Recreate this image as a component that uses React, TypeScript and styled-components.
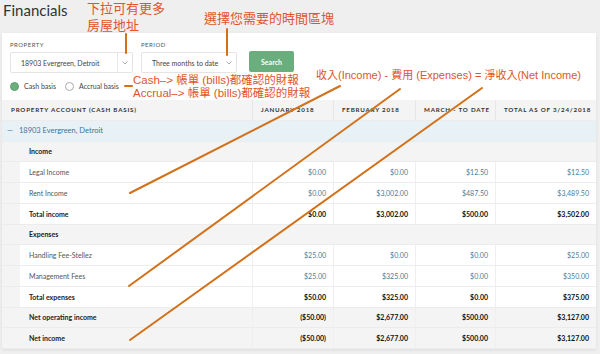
import React from "react";
import styled, { createGlobalStyle, css } from "styled-components";

const GlobalStyle = createGlobalStyle`
  html, body {
    margin: 0;
    padding: 0;
  }
  body {
    background: #efefef;
    font-family: Lato, "Open Sans", sans-serif;
  }
`;

const Page = styled.div`
  position: relative;
  width: 600px;
  height: 354px;
  overflow: hidden;
  padding: 0 4px 0 2px;
  box-sizing: border-box;
`;

const Title = styled.h1`
  margin: 0;
  height: 33px;
  padding: 1px 0 0 1px;
  box-sizing: border-box;
  font-size: 15px;
  line-height: 18px;
  font-weight: 400;
  color: #333;
`;

const Card = styled.section`
  background: #fff;
  box-shadow: 0 1px 3px rgba(0, 0, 0, 0.08);
`;

const Filters = styled.div`
  display: flex;
  align-items: flex-end;
  gap: 8px;
  padding: 8px 8px 0;
`;

const Field = styled.div`
  display: flex;
  flex-direction: column;
  gap: 3px;
`;

const FieldLabel = styled.label`
  font-size: 6px;
  line-height: 8px;
  letter-spacing: 0.5px;
  text-transform: uppercase;
  color: #555;
`;

const Select = styled.div<{ $width: number }>`
  display: flex;
  align-items: center;
  width: ${({ $width }) => $width}px;
  height: 21px;
  box-sizing: border-box;
  border: 1px solid #e4e4e4;
  border-radius: 2px;
  background: #fff;
  font-size: 7px;
  color: #444;
`;

const SelectText = styled.span`
  flex: 1;
  padding-left: 10px;
`;

const Chevron = styled.span<{ $divider?: boolean }>`
  display: flex;
  align-items: center;
  justify-content: center;
  width: 14px;
  height: 100%;
  border-left: ${({ $divider }) => ($divider ? "1px solid #e8e8e8" : "none")};
  color: #999;
`;

const SearchButton = styled.button`
  width: 45px;
  height: 21px;
  margin-left: 4px;
  margin-bottom: 1px;
  border: none;
  border-radius: 2px;
  background: #6aae7d;
  color: #fff;
  font-family: inherit;
  font-size: 7px;
  font-weight: 700;
  padding: 0;
`;

const Basis = styled.div`
  display: flex;
  align-items: center;
  gap: 9px;
  height: 10px;
  margin: 8px 0 9px;
  padding-left: 8px;
`;

const Radio = styled.span`
  display: flex;
  align-items: center;
  gap: 5px;
  font-size: 7px;
  color: #444;
`;

const Dot = styled.span<{ $on?: boolean }>`
  width: 9px;
  height: 9px;
  box-sizing: border-box;
  border-radius: 50%;
  border: 1px solid ${({ $on }) => ($on ? "#5d9f6f" : "#aaa")};
  background: ${({ $on }) => ($on ? "#6aae7d" : "#fff")};
`;

type Tone = "head" | "property" | "section" | "detail" | "total" | "net";

const Row = styled.div<{ $tone: Tone }>`
  display: grid;
  grid-template-columns: 250px 81px 82px 80px 101px;
  height: 20.75px;
  box-sizing: border-box;
  border-bottom: 1px solid #ececec;
  font-size: 7px;
  color: #444;
  background: ${({ $tone }) =>
    $tone === "head" || $tone === "section" || $tone === "net"
      ? "#f4f4f4"
      : $tone === "property"
      ? "#e8f1f6"
      : "#fff"};
  font-weight: ${({ $tone }) => ($tone === "detail" ? 400 : 700)};
  ${({ $tone }) =>
    $tone === "head" &&
    css`
      font-size: 6.2px;
      letter-spacing: 0.8px;
      text-transform: uppercase;
      color: #333;
    `}
`;

const NameCell = styled.div<{ $gutter?: boolean }>`
  display: flex;
  align-items: center;
  padding-left: 27px;
  color: #222;
  ${({ $gutter }) =>
    $gutter &&
    css`
      background: linear-gradient(to right, #f4f4f4 18px, transparent 18px);
    `}
`;

const DetailName = styled(NameCell)`
  color: #555;
`;

const HeadCell = styled.div<{ $first?: boolean }>`
  display: flex;
  align-items: center;
  padding-left: ${({ $first }) => ($first ? 9 : 8)}px;
  border-left: ${({ $first }) => ($first ? "none" : "1px solid #e6e6e6")};
`;

const PropertyCell = styled.div`
  grid-column: 1 / -1;
  display: flex;
  align-items: center;
  gap: 6px;
  padding-left: 5px;
  font-weight: 400;
  font-size: 7.5px;
  color: #3c7694;
`;

const Amount = styled.div<{ $link?: boolean }>`
  display: flex;
  align-items: center;
  justify-content: flex-end;
  padding-right: 7px;
  border-left: 1px solid #efefef;
  color: ${({ $link }) => ($link ? "#4a7d99" : "#111")};
`;

const Overlay = styled.div`
  position: absolute;
  inset: 0;
  pointer-events: none;
  font-family: "Liberation Sans", "Noto Sans CJK TC", sans-serif;
  color: #e0552a;
`;

const Note = styled.div<{ $x: number; $y: number; $size: number }>`
  position: absolute;
  left: ${({ $x }) => $x}px;
  top: ${({ $y }) => $y}px;
  font-size: ${({ $size }) => $size}px;
  line-height: 1.2;
  white-space: nowrap;
`;

const Lines = styled.svg`
  position: absolute;
  inset: 0;
`;

type Line = {
  name: string;
  kind: "detail" | "total" | "net" | "section";
  values?: string[];
};

const rows: Line[] = [
  { name: "Income", kind: "section" },
  { name: "Legal Income", kind: "detail", values: ["$0.00", "$0.00", "$12.50", "$12.50"] },
  { name: "Rent Income", kind: "detail", values: ["$0.00", "$3,002.00", "$487.50", "$3,489.50"] },
  { name: "Total income", kind: "total", values: ["$0.00", "$3,002.00", "$500.00", "$3,502.00"] },
  { name: "Expenses", kind: "section" },
  { name: "Handling Fee-Stellez", kind: "detail", values: ["$25.00", "$0.00", "$0.00", "$25.00"] },
  { name: "Management Fees", kind: "detail", values: ["$25.00", "$325.00", "$0.00", "$350.00"] },
  { name: "Total expenses", kind: "total", values: ["$50.00", "$325.00", "$0.00", "$375.00"] },
  { name: "Net operating income", kind: "net", values: ["($50.00)", "$2,677.00", "$500.00", "$3,127.00"] },
  { name: "Net income", kind: "net", values: ["($50.00)", "$2,677.00", "$500.00", "$3,127.00"] },
];

const columns = ["January 2018", "February 2018", "March - to date", "Total as of 3/24/2018"];

const ChevronIcon = () => (
  <svg width="6" height="4" viewBox="0 0 6 4">
    <path d="M0.5 0.5 L3 3 L5.5 0.5" fill="none" stroke="#999" strokeWidth="0.8" />
  </svg>
);

const App: React.FC = () => {
  return (
    <Page>
      <GlobalStyle />
      <Title>Financials</Title>
      <Card>
        <Filters>
          <Field>
            <FieldLabel>Property</FieldLabel>
            <Select $width={123}>
              <SelectText>18903 Evergreen, Detroit</SelectText>
              <Chevron $divider>
                <ChevronIcon />
              </Chevron>
            </Select>
          </Field>
          <Field>
            <FieldLabel>Period</FieldLabel>
            <Select $width={96}>
              <SelectText>Three months to date</SelectText>
              <Chevron>
                <ChevronIcon />
              </Chevron>
            </Select>
          </Field>
          <SearchButton>Search</SearchButton>
        </Filters>
        <Basis>
          <Radio>
            <Dot $on />
            Cash basis
          </Radio>
          <Radio>
            <Dot />
            Accrual basis
          </Radio>
        </Basis>

        <Row $tone="head">
          <HeadCell $first>Property account (cash basis)</HeadCell>
          {columns.map((c) => (
            <HeadCell key={c}>{c}</HeadCell>
          ))}
        </Row>
        <Row $tone="property">
          <PropertyCell>
            <span>—</span>18903 Evergreen, Detroit
          </PropertyCell>
        </Row>
        {rows.map((r) => (
          <Row key={r.name} $tone={r.kind}>
            {r.kind === "detail" ? (
              <DetailName $gutter>{r.name}</DetailName>
            ) : (
              <NameCell $gutter={r.kind === "total"}>{r.name}</NameCell>
            )}
            {r.values
              ? r.values.map((v, i) => (
                  <Amount key={i} $link={r.kind === "detail"}>
                    {v}
                  </Amount>
                ))
              : null}
          </Row>
        ))}
      </Card>

      <Overlay>
        <Note $x={87} $y={1} $size={13}>
          下拉可有更多
        </Note>
        <Note $x={87} $y={18} $size={13}>
          房屋地址
        </Note>
        <Note $x={204} $y={11} $size={13}>
          選擇您需要的時間區塊
        </Note>
        <Note $x={316} $y={69} $size={11}>
          收入(Income) - 費用 (Expenses) = 淨收入(Net Income)
        </Note>
        <Note $x={133} $y={74} $size={11.5}>
          Cash–&gt; 帳單 (bills)都確認的財報
        </Note>
        <Note $x={133} $y={87} $size={11.5}>
          Accrual–&gt; 帳單 (bills)都確認的財報
        </Note>
        <Lines width="600" height="354" viewBox="0 0 600 354">
          <g stroke="#d2711a" strokeWidth="2" strokeLinecap="round" fill="none">
            <line x1="126" y1="34" x2="126" y2="53" />
            <line x1="227" y1="29" x2="227" y2="55" />
            <line x1="125" y1="86" x2="132" y2="86" />
            <line x1="340" y1="86" x2="130" y2="193" />
            <line x1="400" y1="89" x2="129" y2="286" />
            <line x1="482" y1="88" x2="130" y2="340" />
          </g>
        </Lines>
      </Overlay>
    </Page>
  );
};

export default App;
